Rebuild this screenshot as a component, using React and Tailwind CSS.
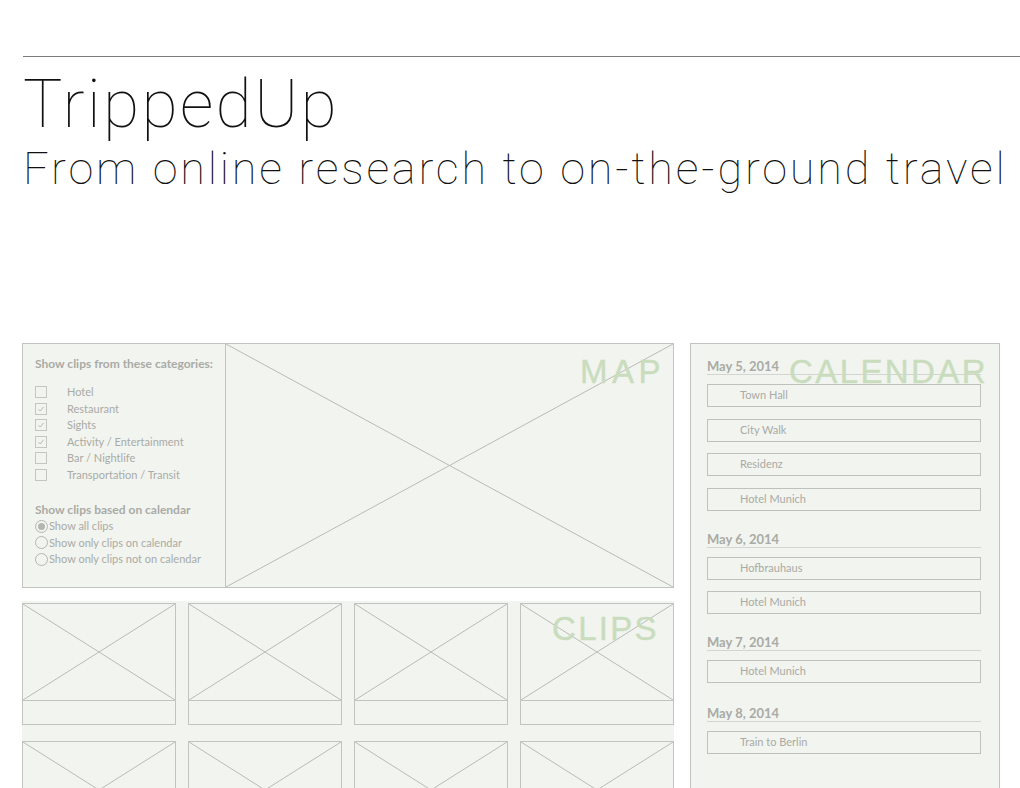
import React from "react";

const categories = [
  { label: "Hotel", checked: false },
  { label: "Restaurant", checked: true },
  { label: "Sights", checked: true },
  { label: "Activity / Entertainment", checked: true },
  { label: "Bar / Nightlife", checked: false },
  { label: "Transportation / Transit", checked: false },
];

const radios = [
  { label: "Show all clips", on: true },
  { label: "Show only clips on calendar", on: false },
  { label: "Show only clips not on calendar", on: false },
];

const days = [
  { date: "May 5, 2014", gap: "", items: ["Town Hall", "City Walk", "Residenz", "Hotel Munich"] },
  { date: "May 6, 2014", gap: "mt-[20px]", items: ["Hofbrauhaus", "Hotel Munich"] },
  { date: "May 7, 2014", gap: "mt-[20px]", items: ["Hotel Munich"] },
  { date: "May 8, 2014", gap: "mt-[22px]", items: ["Train to Berlin"] },
];

function Cross() {
  return (
    <svg className="absolute inset-0 w-full h-full" preserveAspectRatio="none" viewBox="0 0 100 100">
      <line x1="0" y1="0" x2="100" y2="100" stroke="#b9bbb6" strokeWidth="1" vectorEffect="non-scaling-stroke" />
      <line x1="100" y1="0" x2="0" y2="100" stroke="#b9bbb6" strokeWidth="1" vectorEffect="non-scaling-stroke" />
    </svg>
  );
}

function Checkbox({ checked }) {
  return (
    <span className="w-[12px] h-[12px] border border-[#c4c6c1] flex items-center justify-center">
      {checked && (
        <svg width="8" height="8" viewBox="0 0 8 8">
          <polyline points="1.5,4.2 3.2,6 6.6,1.8" fill="none" stroke="#b0b2ad" strokeWidth="0.9" />
        </svg>
      )}
    </span>
  );
}

function Radio({ on }) {
  return (
    <span className="w-[13px] h-[13px] rounded-full border border-[#b4b6b1] flex items-center justify-center">
      {on && <span className="w-[7px] h-[7px] rounded-full bg-[#b4b6b1]" />}
    </span>
  );
}

function ClipCard() {
  return (
    <div className="border border-[#c2c4bf] bg-[#f2f4ef]">
      <div className="relative h-[97px] border-b border-[#c2c4bf]">
        <Cross />
      </div>
      <div className="h-[23px]" />
    </div>
  );
}

export default function App() {
  const label = "font-['Liberation_Sans',Arial,sans-serif] text-[33px] leading-none text-[#c9ddbe] [-webkit-text-stroke:0.4px_#c9ddbe]";
  return (
    <div className="w-[1020px] h-[788px] overflow-hidden bg-white flex flex-col font-['Lato','Open_Sans',sans-serif]">
      <div className="ml-[23px] mt-[56px] border-t-[1.5px] border-[#7c7c7c]" />
      <div className="pl-[23px] text-[#111] font-['Roboto',sans-serif] font-thin">
        <h1 className="mt-[15px] text-[66px] leading-none tracking-[2.4px]">TrippedUp</h1>
        <p className="mt-[8px] text-[45px] leading-none tracking-[2.8px] whitespace-nowrap">From online research to on-the-ground travel</p>
      </div>

      <div className="flex-1 flex gap-[16px] pl-[22px] mt-[152px]">
        <div className="w-[652px] flex flex-col gap-[13px]">
          <div className="h-[245px] flex border border-[#c2c4bf] bg-[#f2f4ef]">
            <div className="w-[203px] border-r border-[#c2c4bf] pl-[12px] pt-[12px] text-[11px] text-[#a9aba6]">
              <div className="h-[16px] leading-[16px] text-[12px] font-bold">Show clips from these categories:</div>
              <div className="mt-[12px]">
                {categories.map((c) => (
                  <div key={c.label} className="h-[16.5px] flex items-center">
                    <Checkbox checked={c.checked} />
                    <span className="ml-[20px]">{c.label}</span>
                  </div>
                ))}
              </div>
              <div className="mt-[19px] h-[16px] leading-[16px] text-[12px] font-bold">Show clips based on calendar</div>
              <div>
                {radios.map((r) => (
                  <div key={r.label} className="h-[16.5px] flex items-center">
                    <Radio on={r.on} />
                    <span className="ml-[1px]">{r.label}</span>
                  </div>
                ))}
              </div>
            </div>
            <div className="flex-1 relative">
              <Cross />
              <span className={`absolute right-[8px] top-[11px] tracking-[4.5px] ${label}`}>MAP</span>
            </div>
          </div>

          <div className="flex-1 relative bg-[#f2f4ef] pt-[2px]">
            <div className="grid grid-cols-4 gap-x-[12px] gap-y-[16px]">
              {Array.from({ length: 8 }).map((_, i) => (
                <ClipCard key={i} />
              ))}
            </div>
            <span className={`absolute left-[530px] top-[11px] tracking-[2.3px] ${label}`}>CLIPS</span>
          </div>
        </div>

        <div className="w-[310px] min-h-[470px] relative border border-[#c2c4bf] bg-[#f2f4ef] pl-[16px] pr-[18px] pt-[14px]">
          {days.map((d) => (
            <div key={d.date} className={d.gap}>
              <div className="h-[17px] leading-[16px] pb-[1px] border-b border-[#d3d5d0] text-[13px] font-bold text-[#a9aba6]">
                {d.date}
              </div>
              <div className="mt-[9px] flex flex-col gap-[11.5px]">
                {d.items.map((it, j) => (
                  <div key={j} className="h-[23px] border border-[#bfc1bc] pl-[32px] flex items-center text-[11px] text-[#a9aba6]">
                    {it}
                  </div>
                ))}
              </div>
            </div>
          ))}
          <span className={`absolute left-[98px] top-[11px] tracking-[2.4px] ${label}`}>CALENDAR</span>
        </div>
      </div>
    </div>
  );
}
